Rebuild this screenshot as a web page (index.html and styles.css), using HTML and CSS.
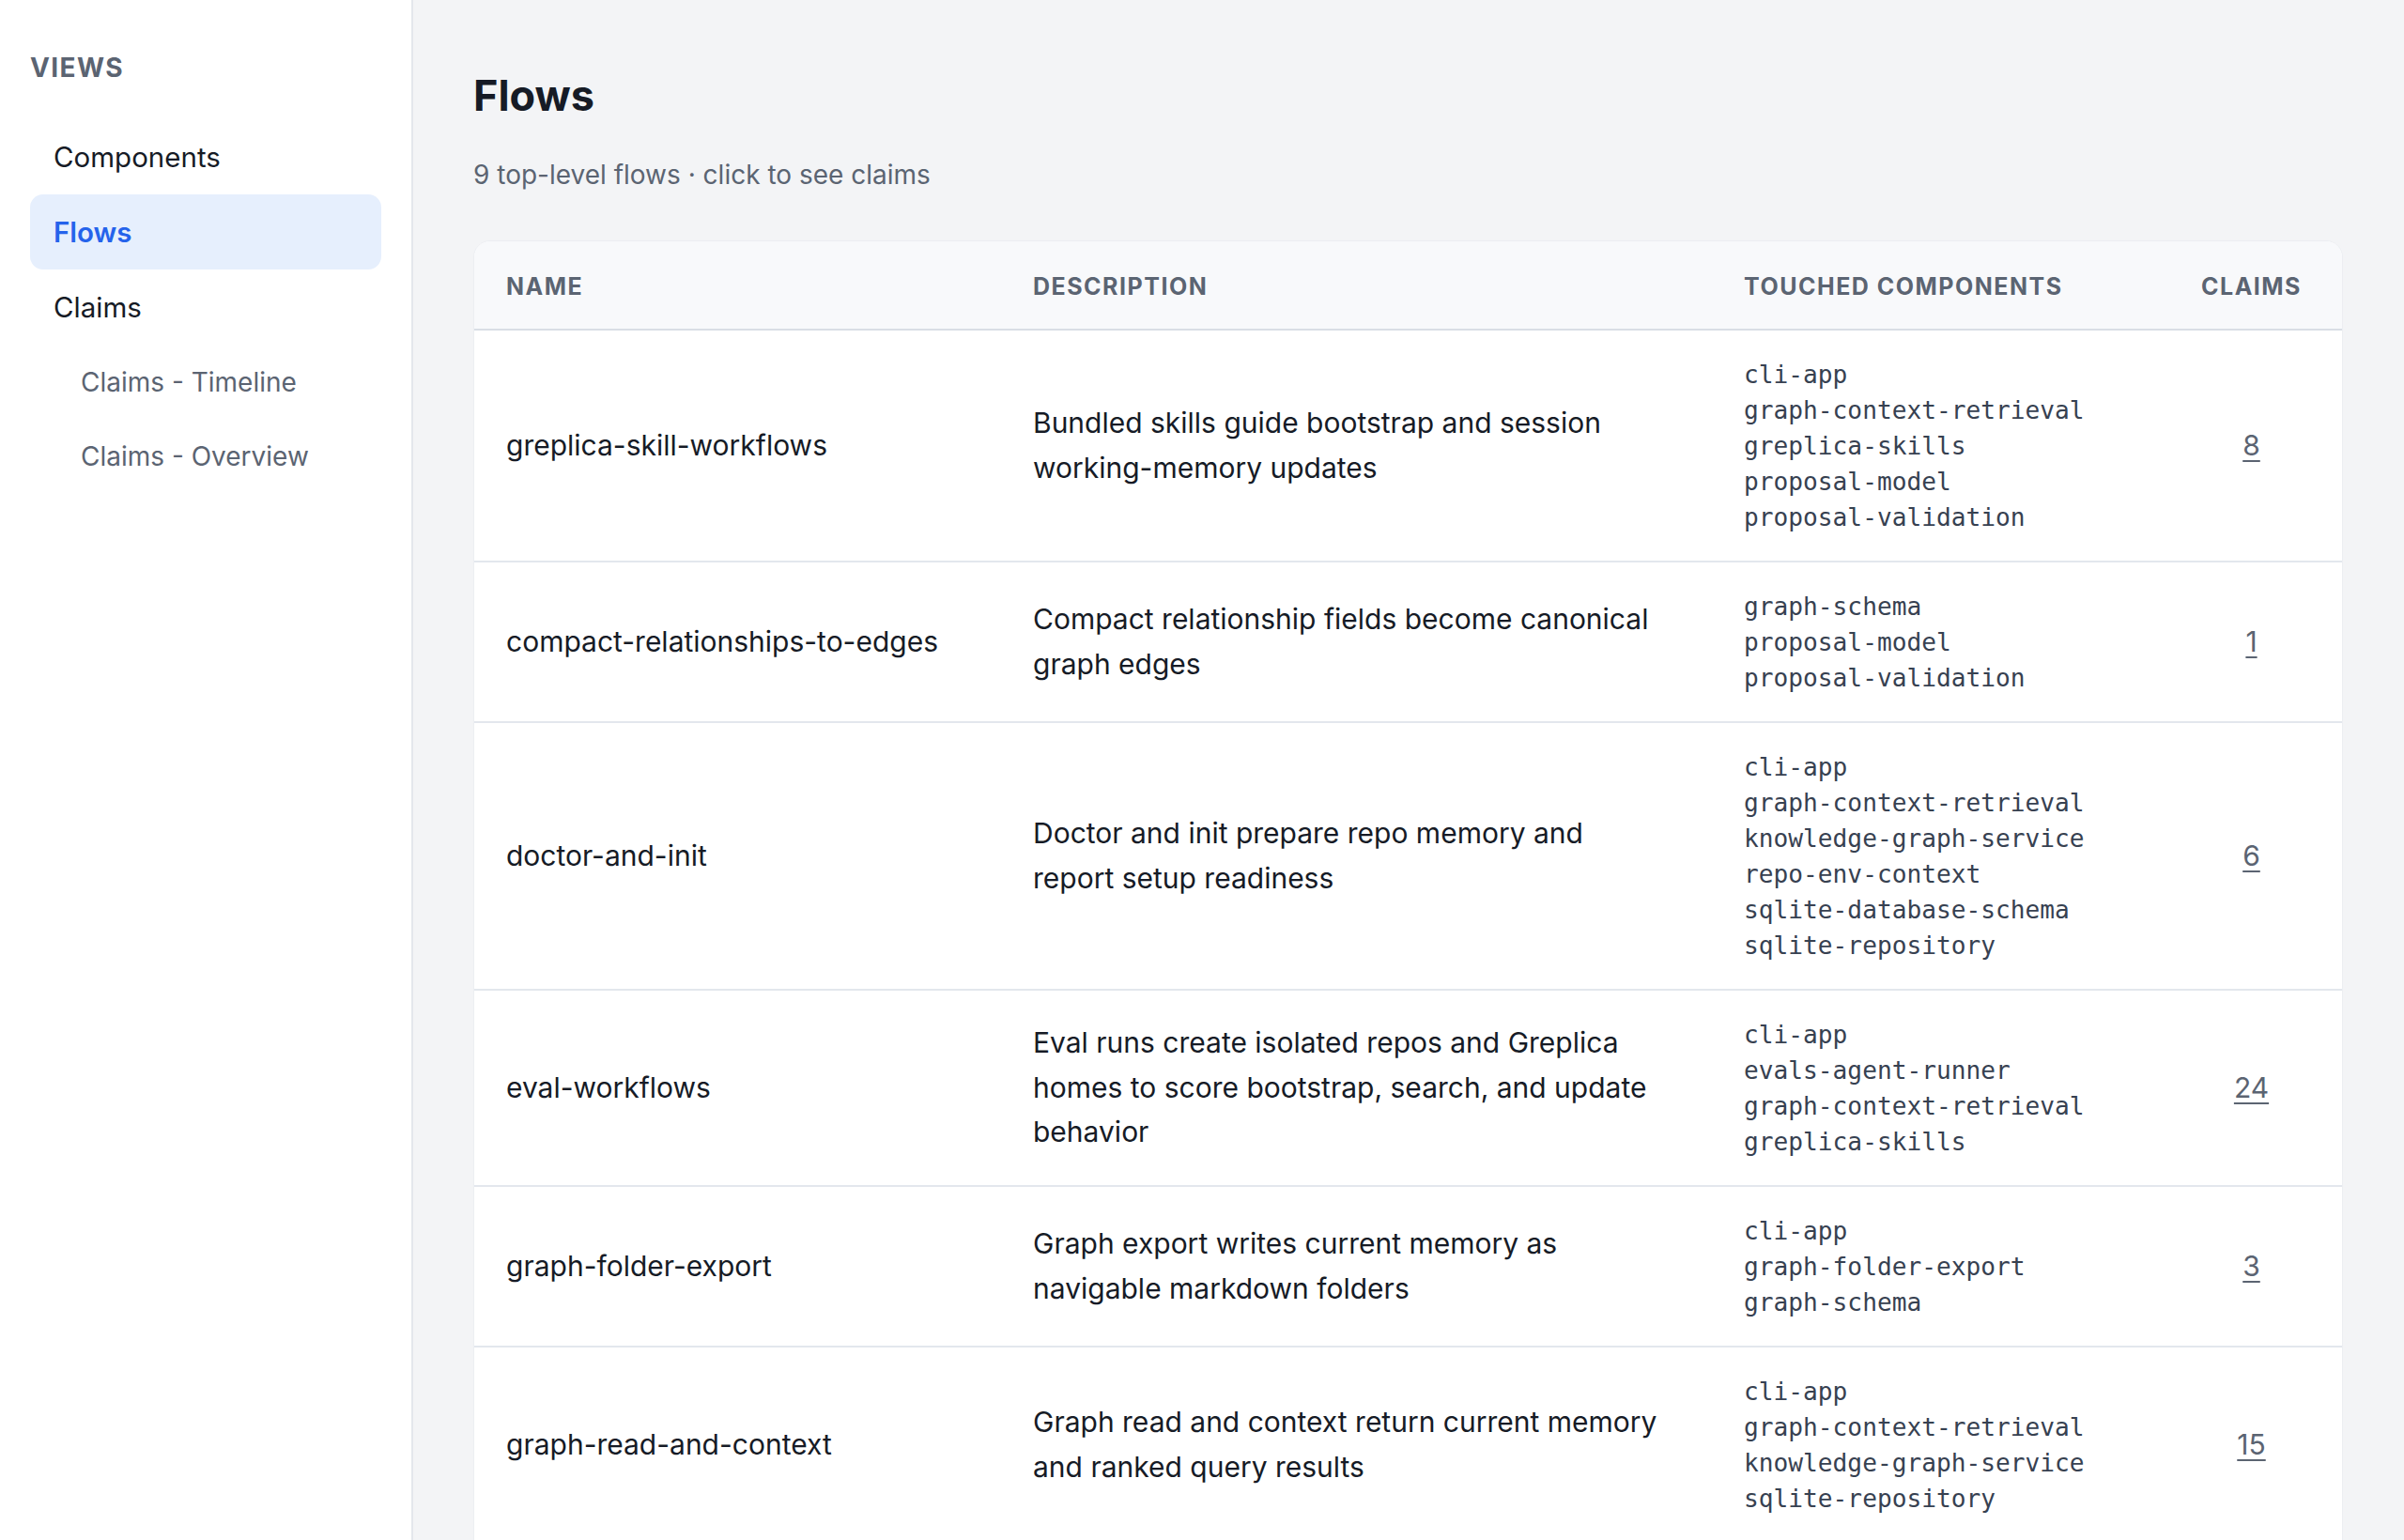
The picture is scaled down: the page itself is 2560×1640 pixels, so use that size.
FILE: index.html
```html
<!DOCTYPE html>
<html lang="en">
<head>
<meta charset="UTF-8" />
<meta name="viewport" content="width=device-width, initial-scale=1" />
<title>Flows</title>
<link rel="stylesheet" href="styles.css">
</head>
<body>

<div class="layout">
  <aside class="sidebar">
    <div class="nav-title">Views</div>
    <nav class="nav">
      <a class="nav-item" href="#">Components</a>
      <a class="nav-item active" href="#">Flows</a>
      <a class="nav-item" href="#">Claims</a>
      <a class="nav-item sub" href="#">Claims - Timeline</a>
      <a class="nav-item sub" href="#">Claims - Overview</a>
    </nav>
  </aside>

  <main class="main">
    <h1>Flows</h1>
    <p class="subtitle">9 top-level flows · click to see claims</p>

    <div class="card">
      <table class="flows">
        <colgroup>
          <col class="col-name">
          <col class="col-desc">
          <col class="col-touched">
          <col class="col-claims">
        </colgroup>
        <thead>
          <tr>
            <th>Name</th>
            <th>Description</th>
            <th>Touched components</th>
            <th class="center">Claims</th>
          </tr>
        </thead>
        <tbody>
          <tr>
            <td>greplica-skill-workflows</td>
            <td class="desc">Bundled skills guide bootstrap and session working-memory updates</td>
            <td class="comps">
              <div>cli-app</div>
              <div>graph-context-retrieval</div>
              <div>greplica-skills</div>
              <div>proposal-model</div>
              <div>proposal-validation</div>
            </td>
            <td class="center"><a class="claims-link" href="#">8</a></td>
          </tr>
          <tr>
            <td>compact-relationships-to-edges</td>
            <td class="desc">Compact relationship fields become canonical graph edges</td>
            <td class="comps">
              <div>graph-schema</div>
              <div>proposal-model</div>
              <div>proposal-validation</div>
            </td>
            <td class="center"><a class="claims-link" href="#">1</a></td>
          </tr>
          <tr>
            <td>doctor-and-init</td>
            <td class="desc">Doctor and init prepare repo memory and report setup readiness</td>
            <td class="comps">
              <div>cli-app</div>
              <div>graph-context-retrieval</div>
              <div>knowledge-graph-service</div>
              <div>repo-env-context</div>
              <div>sqlite-database-schema</div>
              <div>sqlite-repository</div>
            </td>
            <td class="center"><a class="claims-link" href="#">6</a></td>
          </tr>
          <tr>
            <td>eval-workflows</td>
            <td class="desc">Eval runs create isolated repos and Greplica homes to score bootstrap, search, and update behavior</td>
            <td class="comps">
              <div>cli-app</div>
              <div>evals-agent-runner</div>
              <div>graph-context-retrieval</div>
              <div>greplica-skills</div>
            </td>
            <td class="center"><a class="claims-link" href="#">24</a></td>
          </tr>
          <tr>
            <td>graph-folder-export</td>
            <td class="desc">Graph export writes current memory as navigable markdown folders</td>
            <td class="comps">
              <div>cli-app</div>
              <div>graph-folder-export</div>
              <div>graph-schema</div>
            </td>
            <td class="center"><a class="claims-link" href="#">3</a></td>
          </tr>
          <tr>
            <td>graph-read-and-context</td>
            <td class="desc">Graph read and context return current memory and ranked query results</td>
            <td class="comps">
              <div>cli-app</div>
              <div>graph-context-retrieval</div>
              <div>knowledge-graph-service</div>
              <div>sqlite-repository</div>
            </td>
            <td class="center"><a class="claims-link" href="#">15</a></td>
          </tr>
          <tr>
            <td>proposal-apply</td>
            <td class="desc">Validated proposals are applied to the memory graph</td>
            <td class="comps">
              <div>cli-app</div>
              <div>knowledge-graph-service</div>
              <div>proposal-validation</div>
            </td>
            <td class="center"><a class="claims-link" href="#">9</a></td>
          </tr>
          <tr>
            <td>search-and-ranking</td>
            <td class="desc">Search queries rank nodes and edges by relevance</td>
            <td class="comps">
              <div>graph-context-retrieval</div>
              <div>sqlite-repository</div>
            </td>
            <td class="center"><a class="claims-link" href="#">7</a></td>
          </tr>
          <tr>
            <td>session-memory-updates</td>
            <td class="desc">Sessions record working memory and propose updates</td>
            <td class="comps">
              <div>greplica-skills</div>
              <div>proposal-model</div>
            </td>
            <td class="center"><a class="claims-link" href="#">5</a></td>
          </tr>
        </tbody>
      </table>
    </div>
  </main>
</div>

</body>
</html>
```

FILE: styles.css
```css
/* Reset & base */
* {
  box-sizing: border-box;
}
body {
  margin: 0;
  font-family: Inter, 'Noto Sans', 'Liberation Sans', sans-serif;
  color: #161b26;
  background: #f3f4f6;
}

.layout {
  display: grid;
  grid-template-columns: 440px 1fr;
  min-height: 100vh;
}

/* Sidebar */
.sidebar {
  background: #fff;
  border-right: 2px solid #e4e7ec;
  padding: 55px 32px 0 32px;
}
.nav-title {
  font-size: 28px;
  line-height: 34px;
  font-weight: 700;
  letter-spacing: 0.05em;
  text-transform: uppercase;
  color: #5b6472;
  margin-bottom: 38px;
}
.nav {
  display: flex;
  flex-direction: column;
}
.nav-item {
  display: block;
  font-size: 29.5px;
  line-height: 44px;
  padding: 18px 25px;
  border-radius: 14px;
  color: #161b26;
  text-decoration: none;
}
.nav-item.active {
  background: #e6effd;
  color: #2563eb;
  font-weight: 600;
}
.nav-item.sub {
  font-size: 28px;
  line-height: 42px;
  padding: 18.5px 25px 18.5px 54px;
  color: #5b6472;
}

/* Main content */
.main {
  padding: 75px 65px 64px 64px;
  min-width: 0;
}
h1 {
  margin: 0;
  font-size: 45px;
  line-height: 54px;
  font-weight: 700;
  color: #161b26;
}
.subtitle {
  margin: 36px 0 49px 0;
  font-size: 28px;
  line-height: 42px;
  color: #5b6472;
}

/* Table card */
.card {
  background: #fff;
  border: 1px solid #eceef2;
  border-radius: 18px;
  overflow: hidden;
}
.flows {
  width: 100%;
  border-collapse: collapse;
  table-layout: fixed;
}
.col-name { width: 561px; }
.col-desc { width: 757px; }
.col-touched { width: 478px; }

.flows th {
  background: #f8f9fb;
  text-align: left;
  font-size: 25px;
  line-height: 34px;
  font-weight: 700;
  letter-spacing: 0.06em;
  text-transform: uppercase;
  color: #5b6472;
  padding: 31px 34px 28px 34px;
  border-bottom: 2px solid #d9dee5;
}
.flows td {
  font-size: 30px;
  line-height: 47.5px;
  padding: 27.5px 34px;
  vertical-align: middle;
  border-bottom: 2px solid #e3e7ed;
  color: #161b26;
}
.flows td.desc {
  padding-right: 51px;
}
.flows .center {
  text-align: center;
}
.flows td.comps {
  font-family: 'DejaVu Sans Mono', 'Liberation Mono', monospace;
  font-size: 26.2px;
  line-height: 38px;
  color: #374151;
}
.claims-link {
  color: #5b6472;
  text-decoration: underline;
  text-decoration-thickness: 2px;
  text-underline-offset: 5px;
}
```
